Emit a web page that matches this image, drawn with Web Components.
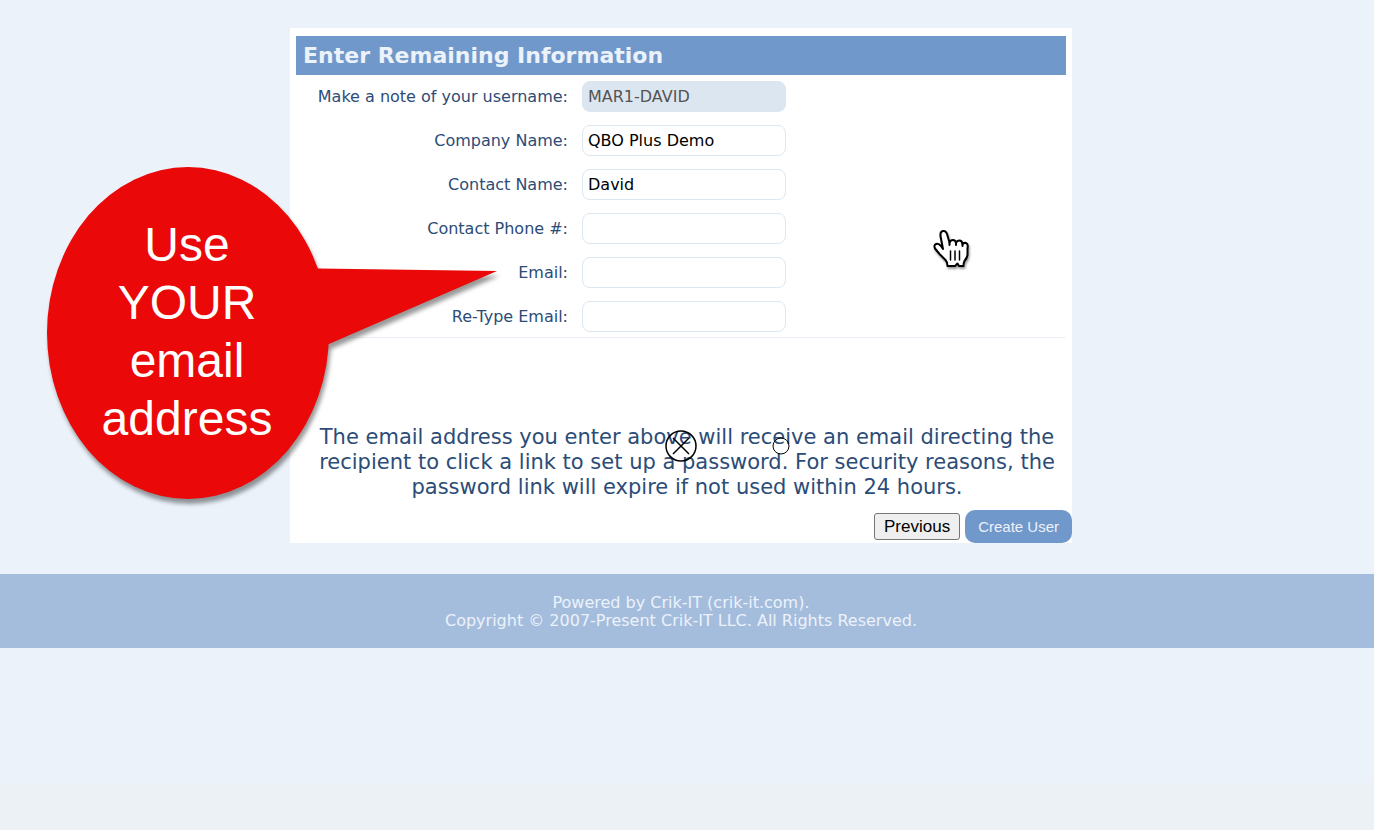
<!DOCTYPE html>
<html lang="en">
<head>
<meta charset="utf-8">
<meta name="viewport" content="width=device-width, initial-scale=1">
<title>Enter Remaining Information</title>
<style>
html { background: #ecf1f5; }
body { margin: 0; background: #ecf1f5; font-family: "DejaVu Sans", Verdana, sans-serif; }
</style>
</head>
<body>
<registration-page></registration-page>

<script>
function define(name, html, setup) {
  const template = document.createElement('template');
  template.innerHTML = html;
  customElements.define(name, class extends HTMLElement {
    constructor() {
      super();
      this.attachShadow({ mode: 'open' }).append(template.content.cloneNode(true));
    }
    connectedCallback() { if (setup) setup(this, this.shadowRoot); }
  });
}

define('form-field', `
<style>
  :host { display: grid; grid-template-columns: minmax(0, 272px) minmax(0, 204px); column-gap: 14px; align-items: center; }
  label { text-align: right; font-size: 16px; line-height: 20px; color: #2c4c77; }
  input { box-sizing: border-box; width: 100%; height: 31px; margin: 0; padding: 0 5px; border: 1px solid #dce6f0; border-radius: 8px; background: #fff; color: #000; font-family: inherit; font-size: 16px; outline: none; }
  input:disabled { background: #dce6f0; color: #545454; }
</style>
<label for="field"></label><input id="field" type="text">`, (host, root) => {
  root.querySelector('label').textContent = host.getAttribute('label');
  const input = root.querySelector('input');
  input.value = host.getAttribute('value') || '';
  input.type = host.getAttribute('type') || 'text';
  input.disabled = host.hasAttribute('disabled');
});

define('form-panel', `
<style>
  :host { display: block; background: #fff; }
  .content { padding: 8px 6px 0; }
  h1 { margin: 0; padding: 0 7px; background: #7198ca; color: #ebf2fa; font-size: 22px; line-height: 39px; font-weight: bold; }
  .fields { display: grid; row-gap: 13px; padding: 6px 0 5px; border-bottom: 1px solid #ebf0f6; }
  .note { padding: 87px 4px 0 16px; text-align: center; color: #2c4c77; font-size: 21px; line-height: 25px; }
  .actions { display: flex; justify-content: flex-end; align-items: center; gap: 5px; padding-top: 10px; }
</style>
<div class="content">
  <h1><slot name="title"></slot></h1>
  <div class="fields"><slot></slot></div>
  <div class="note"><slot name="note"></slot></div>
</div>
<div class="actions"><slot name="actions"></slot></div>`);

define('action-button', `
<style>
  :host { display: block; }
  button { display: block; box-sizing: border-box; margin: 0; height: 27px; padding: 0 9px; border: 1px solid #767676; border-radius: 3px; background: #efefef; color: #000; font: 17px "Liberation Sans", Arial, sans-serif; }
  :host([primary]) button { height: 33px; padding: 0 13px; border: 0; border-radius: 10px; background: #7198ca; color: #ebf2fa; font-size: 15px; }
</style>
<button type="button"><slot></slot></button>`);

define('page-footer', `
<style>
  :host { display: block; box-sizing: border-box; padding: 20px 12px 18px 0; background: #a5bddd; color: #ebf2fa; text-align: center; font-size: 16px; line-height: 18px; }
</style>
<footer><slot></slot></footer>`);

define('speech-callout', `
<style>
  :host { display: grid; width: 450px; height: 332px; }
  svg { grid-area: 1 / 1; overflow: visible; filter: drop-shadow(2px 5px 2px rgba(0, 0, 0, .4)); }
  p { grid-area: 1 / 1; z-index: 1; width: 280px; align-self: center; margin: 0; padding-bottom: 3px; text-align: center; color: #fff; font: 48px/58px "Liberation Sans", Arial, sans-serif; }
</style>
<svg width="450" height="332" viewBox="0 0 450 332" fill="#ea0808" aria-hidden="true">
  <ellipse cx="141" cy="166" rx="141" ry="166"/>
  <path d="M240 101.500L271 101.500L450 104L282 177L240 196Z"/>
</svg>
<p><slot></slot></p>`);

define('pointer-hand', `
<style>
  :host { display: block; }
  svg { display: block; filter: drop-shadow(1px 2px 1px rgba(0, 0, 0, .4)); }
</style>
<svg width="40" height="42" viewBox="0 0 40 42" fill="#fff" stroke="#000" stroke-width="2" stroke-linejoin="round" stroke-linecap="round" aria-hidden="true">
  <path d="M12 21L9.500 8Q9 3.500 12 3Q15 2.500 16 6L18.500 14.500Q19.500 12 22 12Q24.500 12 25 15Q26 12.500 28.500 12.500Q31 12.500 31.500 16Q33 14.500 35 15Q37.500 16 36.500 20V27Q36 30 33.500 33Q32.500 35 32.500 38H28L26.500 35.500L24 38H16.500Q16.500 34 14.500 32L8.500 26L4 20.500Q2.500 17 5 16Q7.500 15 10 18Z"/>
  <path d="M18.500 14.500V17M25 15V17M31.500 16V18" fill="none"/>
  <path d="M19.500 23V32M24 23V32M28.500 23V32" fill="none" stroke-width="1.500"/>
</svg>`);

define('click-marker', `
<style>:host { display: block; } svg { display: block; }</style>
<svg width="134" height="34" viewBox="0 0 134 34" fill="none" stroke="#000" aria-hidden="true">
  <circle cx="17" cy="17" r="15" stroke-width="1.500"/>
  <path d="M9 9L25 25M25 9L9 25" stroke-width="1.500"/>
  <circle cx="117" cy="17" r="8"/>
</svg>`);

define('registration-page', `
<style>
  :host { display: block; position: relative; }
  .page { box-sizing: border-box; min-height: 783px; padding-top: 28px; background: #ebf2fa; }
  main { padding-right: 12px; margin-bottom: 31px; }
  form-panel { width: 100%; max-width: 782px; margin: 0 auto; }
  .link { color: inherit; text-decoration: none; }
  speech-callout, pointer-hand, click-marker { position: absolute; pointer-events: none; }
  speech-callout { left: 47px; top: 167px; }
  pointer-hand { left: 931px; top: 228px; }
  click-marker { left: 664px; top: 429px; }
</style>
<div class="page">
  <main>
    <form-panel>
      <span slot="title">Enter Remaining Information</span>
      <form-field label="Make a note of your username:" value="MAR1-DAVID" disabled></form-field>
      <form-field label="Company Name:" value="QBO Plus Demo"></form-field>
      <form-field label="Contact Name:" value="David"></form-field>
      <form-field label="Contact Phone #:" type="tel"></form-field>
      <form-field label="Email:" type="email"></form-field>
      <form-field label="Re-Type Email:" type="email"></form-field>
      <span slot="note">The email address you enter above will receive an email directing the recipient to click a link to set up a password. For security reasons, the password link will expire if not used within 24 hours.</span>
      <action-button slot="actions">Previous</action-button>
      <action-button slot="actions" primary>Create User</action-button>
    </form-panel>
  </main>
  <page-footer>Powered by Crik-IT (<a class="link" href="#">crik-it.com</a>).<br>Copyright © 2007-Present Crik-IT LLC. All Rights Reserved.</page-footer>
</div>
<speech-callout>Use<br>YOUR<br>email<br>address</speech-callout>
<pointer-hand></pointer-hand>
<click-marker></click-marker>`);
</script>
</body>
</html>
